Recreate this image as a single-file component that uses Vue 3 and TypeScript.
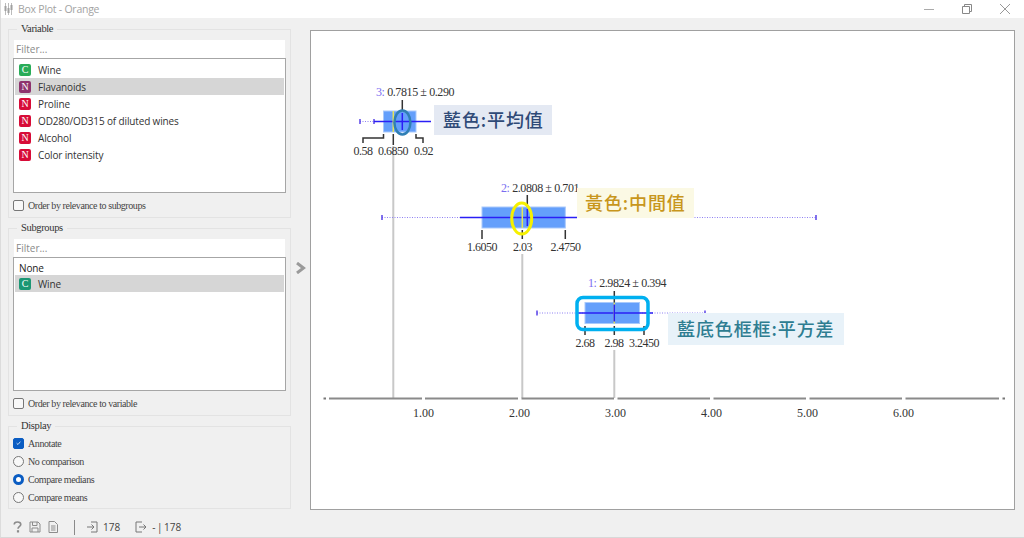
<script setup lang="ts">
interface VarItem {
  kind: 'C' | 'N'
  name: string
  color: string
  selected?: boolean
}

const variables: VarItem[] = [
  { kind: 'C', name: 'Wine', color: '#1ea850' },
  { kind: 'N', name: 'Flavanoids', color: '#8b2a68', selected: true },
  { kind: 'N', name: 'Proline', color: '#d5002e' },
  { kind: 'N', name: 'OD280/OD315 of diluted wines', color: '#d5002e' },
  { kind: 'N', name: 'Alcohol', color: '#d5002e' },
  { kind: 'N', name: 'Color intensity', color: '#d5002e' },
]

const plots = [
  {
    index: '3:', stats: '0.7815 ± 0.290', headX: 376, headY: 96,
    top: 111, height: 21, mid: 121.5, q1: 383.5, q3: 416, median: 393.3, mean: 402.3,
    sd: [374, 431], whisk: [360, 374], stemTop: 100,
    leaders: 'M363 143V138H383.5V134M393.3 134V145M416 134V138H423V143',
    labels: [{ x: 363, t: '0.58' }, { x: 393, t: '0.6850' }, { x: 423.5, t: '0.92' }],
    labelY: 155, drop: [146, 398],
  },
  {
    index: '2:', stats: '2.0808 ± 0.701', headX: 501, headY: 192,
    top: 207, height: 21, mid: 217.5, q1: 482, q3: 565.3, median: 522.3, mean: 527.3,
    sd: [460, 577], whisk: [382, 816], stemTop: 195,
    leaders: 'M482 230V239M522.3 230V239M565.3 230V239',
    labels: [{ x: 482, t: '1.6050' }, { x: 522.5, t: '2.03' }, { x: 565.5, t: '2.4750' }],
    labelY: 251, drop: [254, 398],
  },
  {
    index: '1:', stats: '2.9824 ± 0.394', headX: 588, headY: 287,
    top: 302.5, height: 21, mid: 313, q1: 585, q3: 639.5, median: 614.3, mean: 614.3,
    sd: [577, 653], whisk: [537, 705], stemTop: 291,
    leaders: 'M585 326V335M614.3 326V335M644 326V335',
    labels: [{ x: 585, t: '2.68' }, { x: 614, t: '2.98' }, { x: 644, t: '3.2450' }],
    labelY: 347, drop: [350, 398],
  },
]

const axisTicks = [1, 2, 3, 4, 5, 6].map((v, i) => ({ x: 423.6 + i * 96, label: v.toFixed(2) }))
const axisSegments = [329, 425, 521.5, 617.5, 713.5, 809.5, 905.5].map((x, i) => ({
  x,
  end: i === 6 ? 999 : 422 + i * 96,
}))

const callouts = [
  { x: 434, y: 105, w: 118, h: 30, fill: '#e4e9f3', color: '#2f4a77', textX: 443, text: '藍色:平均值' },
  { x: 577, y: 188, w: 117, h: 30, fill: '#fbf9e4', color: '#c8961c', textX: 585, text: '黃色:中間值' },
  { x: 668, y: 313, w: 176, h: 32, fill: '#e8f2f9', color: '#2e7d91', textX: 677, text: '藍底色框框:平方差' },
]
</script>

<template>
  <div class="window">
    <header class="titlebar">
      <svg class="app-icon" width="9" height="14" viewBox="0 0 9 14">
        <path d="M1.5 1V13M4.5 1V13M7.5 1V13" stroke="#bbb" stroke-width="1" />
        <path d="M0.5 4H2.5V9H0.5ZM3.5 6H5.5V11H3.5ZM6.5 3H8.5V8H6.5Z" fill="#a0a0a0" />
      </svg>
      <span class="title">Box Plot - Orange</span>
      <div class="win-buttons">
        <svg width="12" height="12" viewBox="0 0 12 12"><path d="M1 6.5H11" stroke="#aaa" /></svg>
        <svg width="12" height="12" viewBox="0 0 12 12">
          <path d="M1.5 3.5H8.5V10.5H1.5ZM3.5 3.5V1.5H10.5V8.5H8.5" fill="none" stroke="#888" />
        </svg>
        <svg width="12" height="12" viewBox="0 0 12 12"><path d="M1 1L11 11M11 1L1 11" stroke="#999" /></svg>
      </div>
    </header>

    <main class="body">
      <aside class="sidebar">
        <fieldset class="group">
          <legend>Variable</legend>
          <div class="filter">Filter...</div>
          <ul class="list list-var">
            <li v-for="v in variables" :key="v.name" class="row" :class="{ selected: v.selected }">
              <span class="badge" :style="{ background: v.color }">{{ v.kind }}</span>
              {{ v.name }}
            </li>
          </ul>
          <label class="option check-row"><span class="check" />Order by relevance to subgroups</label>
        </fieldset>

        <fieldset class="group">
          <legend>Subgroups</legend>
          <div class="filter">Filter...</div>
          <ul class="list list-sub">
            <li class="row none">None</li>
            <li class="row selected">
              <span class="badge" style="background: #13946f">C</span>
              Wine
            </li>
          </ul>
          <label class="option check-row"><span class="check" />Order by relevance to variable</label>
        </fieldset>

        <fieldset class="group display">
          <legend>Display</legend>
          <label class="option"><span class="check on">
            <svg width="12" height="12" viewBox="0 0 12 12"><path d="M3.5 6.3L5.3 8L8.5 4.2" fill="none" stroke="#fff" /></svg>
          </span>Annotate</label>
          <label class="option"><span class="radio" />No comparison</label>
          <label class="option"><span class="radio on" />Compare medians</label>
          <label class="option"><span class="radio" />Compare means</label>
        </fieldset>

        <footer class="statusbar">
          <svg width="9" height="12" viewBox="0 0 9 12" class="st-icon">
            <path d="M1.2 3.6C1.2 1.8 2.6 1 4.4 1S7.8 2 7.8 3.5C7.8 5.4 5 5.4 5 7.8" fill="none" stroke="#8c8c8c" stroke-width="1.6" />
            <path d="M3.9 9.2H6.1V11.5H3.9Z" fill="#8c8c8c" />
          </svg>
          <svg width="12" height="12" viewBox="0 0 12 12" class="st-icon">
            <path d="M1 1H9L11 3V11H1ZM3.5 1V4.5H8V1M3 11V7H9V11" fill="none" stroke="#8c8c8c" />
          </svg>
          <svg width="10" height="12" viewBox="0 0 10 12" class="st-icon">
            <path d="M1 .5H6.5L9.5 3.5V11.5H1ZM3 5H7.5M3 7H7.5M3 9H7.5" fill="none" stroke="#8c8c8c" />
          </svg>
          <span class="st-divider" />
          <svg width="12" height="12" viewBox="0 0 12 12" class="st-icon in">
            <path d="M5 1H11V11H5M1 6H7.5M5.5 3.5L8 6L5.5 8.5" fill="none" stroke="#777" />
          </svg>
          <span class="st-text">178</span>
          <svg width="12" height="12" viewBox="0 0 12 12" class="st-icon out">
            <path d="M7 1H1V11H7M4 6H11M8.5 3.5L11 6L8.5 8.5" fill="none" stroke="#777" />
          </svg>
          <span class="st-text">- | 178</span>
        </footer>
      </aside>

      <div class="toggle">
        <svg width="11" height="12" viewBox="0 0 11 12"><path d="M2 1L8.5 6L2 11" fill="none" stroke="#9a9a9a" stroke-width="3" /></svg>
      </div>

      <section class="panel">
        <svg class="chart" viewBox="311 31 703 478" width="703" height="478">
          <line
            v-for="p in plots" :key="'drop' + p.index"
            :x1="p.median" :x2="p.median" :y1="p.drop[0]" :y2="p.drop[1]"
            stroke="#c8c8c8" stroke-width="2"
          />

          <g v-for="p in plots" :key="p.index">
            <line :x1="p.whisk[0]" :x2="p.whisk[1]" :y1="p.mid" :y2="p.mid" stroke="#8f80f2" stroke-dasharray="1 1.5" />
            <path :d="`M${p.whisk[0]} ${p.mid - 2.5}V${p.mid + 2.5}M${p.whisk[1]} ${p.mid - 2.5}V${p.mid + 2.5}`" stroke="#5a44e8" stroke-width="1.5" />
            <rect :x="p.q1" :y="p.top" :width="p.q3 - p.q1" :height="p.height" fill="#649ffb" stroke="#a9c9fb" />
            <line :x1="p.sd[0]" :x2="p.sd[1]" :y1="p.mid" :y2="p.mid" stroke="#2a1ff5" stroke-width="1.5" />
            <line :x1="p.median" :x2="p.median" :y1="p.top" :y2="p.top + p.height" stroke="#e4e45a" stroke-width="1.5" />
            <line :x1="p.mean" :x2="p.mean" :y1="p.top + 2" :y2="p.top + p.height - 2" stroke="#2a1ff5" stroke-width="1.5" />
            <line :x1="p.mean" :x2="p.mean" :y1="p.stemTop" :y2="p.top" stroke="#333" stroke-width="1.5" />
            <path :d="p.leaders" fill="none" stroke="#333" stroke-width="1.5" />
            <text class="head" :x="p.headX" :y="p.headY"><tspan fill="#7a6cf0">{{ p.index }}</tspan> {{ p.stats }}</text>
            <text v-for="l in p.labels" :key="l.t" class="tick-label" :x="l.x" :y="p.labelY" text-anchor="middle">{{ l.t }}</text>
          </g>

          <ellipse cx="402.4" cy="122.5" rx="8" ry="12" fill="none" stroke="#2f7fb5" stroke-width="2.5" />
          <ellipse cx="521.7" cy="218.5" rx="10" ry="15.5" fill="none" stroke="#f6f000" stroke-width="3" />
          <rect x="577" y="297.5" width="71" height="32" rx="6" fill="none" stroke="#00b0f0" stroke-width="3.5" />

          <g v-for="c in callouts" :key="c.text">
            <rect :x="c.x" :y="c.y" :width="c.w" :height="c.h" :fill="c.fill" />
            <text class="callout" :x="c.textX" :y="c.y + c.h / 2 + 7" :fill="c.color">{{ c.text }}</text>
          </g>

          <path d="M323.5 398.5H326M1002.5 398.5H1005" stroke="#777" stroke-width="2" />
          <line v-for="s in axisSegments" :key="s.x" :x1="s.x" :x2="s.end" y1="398.5" y2="398.5" stroke="#8a8a8a" stroke-width="2" />
          <text v-for="t in axisTicks" :key="t.label" class="axis-label" :x="t.x" y="417" text-anchor="middle">{{ t.label }}</text>
        </svg>
      </section>
    </main>
  </div>
</template>

<style scoped>
.window {
  width: 1024px;
  height: 538px;
  display: flex;
  flex-direction: column;
  background: #f0f0f0;
  overflow: hidden;
  box-sizing: border-box;
  border-left: 1px solid #dcdcdc;
  border-bottom: 1px solid #d8d8d8;
}

.titlebar {
  height: 18px;
  flex: none;
  display: flex;
  align-items: center;
  background: #fff;
  padding-left: 4px;
  margin-left: -1px;
  font-family: "Open Sans", sans-serif;
  font-size: 10.5px;
  letter-spacing: -0.25px;
  color: #a3a3a3;
}

.app-icon { margin-right: 5px; }

.win-buttons {
  margin-left: auto;
  display: flex;
  gap: 26px;
  padding-right: 13px;
}

.body {
  flex: 1;
  display: flex;
  min-height: 0;
}

.sidebar {
  width: 283px;
  margin-left: 7px;
  padding-top: 5px;
  flex: none;
  display: flex;
  flex-direction: column;
}

.group {
  margin: 0 0 4px;
  padding: 5px 5px 6px;
  border: 1px solid #e3e3e3;
  min-width: 0;
  box-sizing: border-box;
}

.group legend {
  margin-left: 3px;
  padding: 0 4px;
  font-family: "Liberation Serif", serif;
  font-size: 10.5px;
  letter-spacing: -0.35px;
  line-height: 12px;
  color: #333;
}

.filter {
  height: 18px;
  padding-left: 2px;
  background: #fff;
  font-family: "Open Sans", sans-serif;
  font-size: 10px;
  line-height: 18px;
  color: #8a8a8a;
}

.list {
  list-style: none;
  margin: 0 -1px;
  padding: 2px 1px;
  background: #fff;
  border: 1px solid #a6a6a6;
  box-sizing: border-box;
}

.list-var { height: 135px; }
.list-sub { height: 134px; }

.row {
  height: 17px;
  display: flex;
  align-items: center;
  gap: 7px;
  padding-left: 4px;
  font-family: "Open Sans", sans-serif;
  font-size: 10px;
  letter-spacing: -0.14px;
  color: #333;
}

.row.none {
  height: 15px;
  color: #222;
}

.row.selected { background: #d6d6d6; }

.badge {
  width: 12px;
  height: 12px;
  border-radius: 2px;
  flex: none;
  display: flex;
  align-items: center;
  justify-content: center;
  font-family: "Liberation Serif", serif;
  font-size: 10px;
  color: #fff;
  opacity: 0.95;
}

.option {
  display: flex;
  align-items: center;
  gap: 4px;
  height: 18px;
  font-family: "Liberation Serif", serif;
  font-size: 10px;
  letter-spacing: -0.42px;
  color: #444;
}

.check-row {
  height: 12px;
  margin-top: 6px;
  margin-left: -1px;
}

.check {
  width: 9px;
  height: 9px;
  border: 1px solid #777;
  border-radius: 2px;
  background: #f8f8f8;
  flex: none;
  display: flex;
  align-items: center;
  justify-content: center;
}

.check.on {
  background: #0a5cc2;
  border-color: #0a5cc2;
}

.radio {
  width: 9px;
  height: 9px;
  border: 1px solid #777;
  border-radius: 50%;
  background: #f8f8f8;
  flex: none;
}

.radio.on {
  border: 3px solid #0a5cc2;
  width: 5px;
  height: 5px;
  background: #fff;
}

.display .option { margin-left: -1px; }
.display { padding-top: 2px; padding-bottom: 2px; }

.statusbar {
  display: flex;
  align-items: center;
  height: 16px;
  margin-top: 6px;
  padding-left: 5px;
  font-family: "Open Sans", sans-serif;
  font-size: 10px;
  word-spacing: -1px;
  color: #444;
}

.st-icon { margin-right: 7px; }
.st-icon.in { margin-right: 5px; }
.st-icon.out { margin-left: 15px; margin-right: 5px; }

.st-divider {
  width: 1px;
  height: 15px;
  background: #8a8a8a;
  margin: 0 11px 0 9px;
}

.toggle {
  width: 19px;
  flex: none;
  display: flex;
  justify-content: center;
  padding-top: 244px;
  box-sizing: border-box;
}

.panel {
  width: 705px;
  height: 480px;
  margin-top: 12px;
  background: #fff;
  border: 1px solid #a0a0a0;
  box-sizing: border-box;
}

.chart { display: block; }

.head {
  font-family: "Liberation Serif", serif;
  font-size: 12px;
  letter-spacing: -0.4px;
  fill: #333;
}

.tick-label {
  font-family: "Liberation Serif", serif;
  font-size: 12px;
  letter-spacing: -0.5px;
  fill: #333;
}

.axis-label {
  font-family: "Liberation Serif", serif;
  font-size: 12px;
  fill: #333;
}

.callout {
  font-family: "Noto Sans CJK TC", sans-serif;
  font-size: 18px;
  font-weight: 500;
  letter-spacing: 0.9px;
}
</style>

<style>
html, body {
  margin: 0;
  overflow: hidden;
}
</style>
